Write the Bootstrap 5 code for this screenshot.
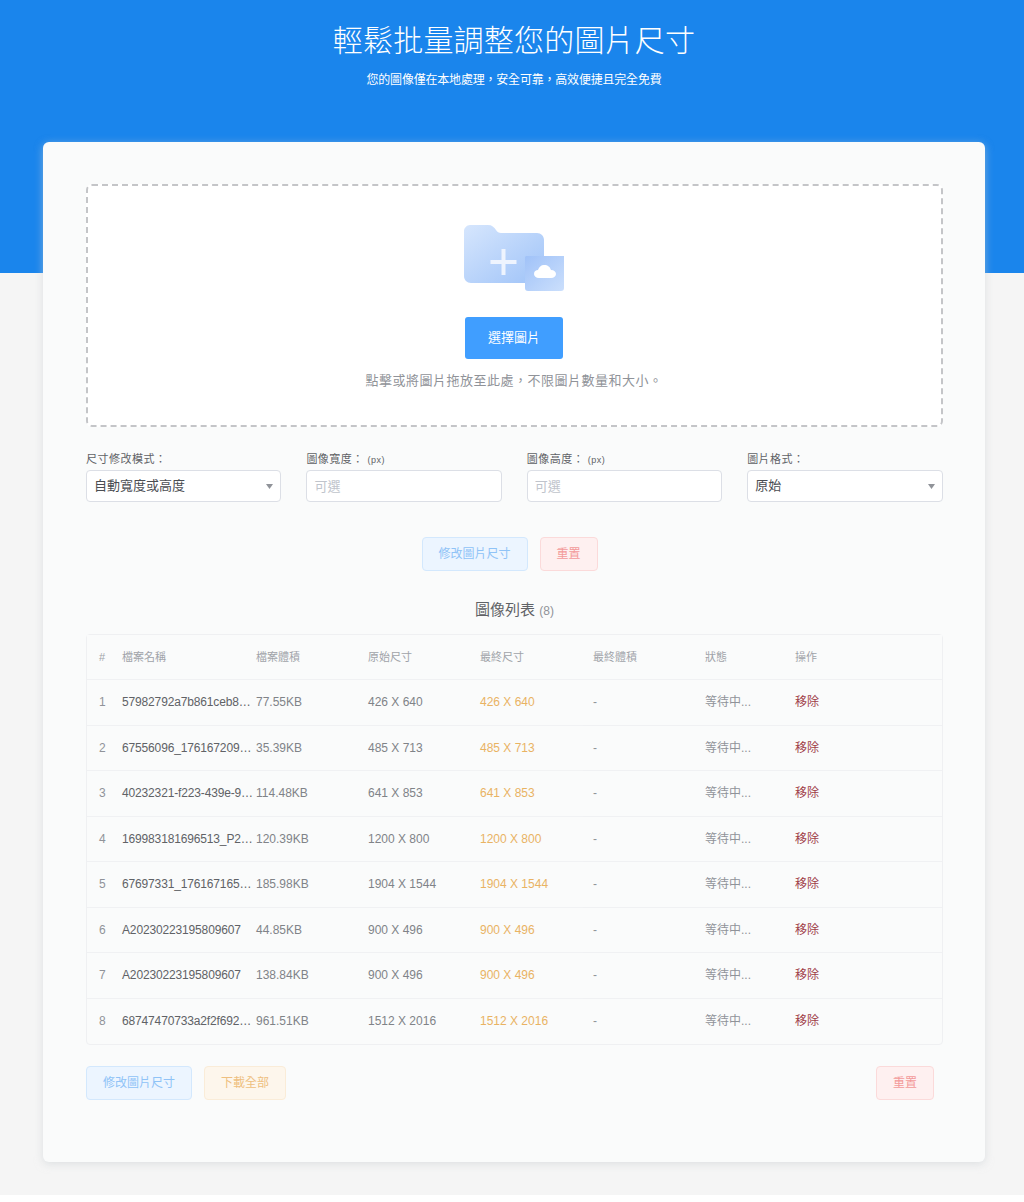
<!DOCTYPE html>
<html lang="zh-Hant">
<head>
<meta charset="utf-8">
<title>輕鬆批量調整您的圖片尺寸</title>
<link href="https://cdn.jsdelivr.net/npm/bootstrap@5.3.0/dist/css/bootstrap.min.css" rel="stylesheet">
<style>
html,body{background:#fff;}
body{font-family:"Liberation Sans","Noto Sans CJK TC",sans-serif;color:#606266;}
.page-wrap{background:#f5f5f5;height:1195px;overflow:hidden;}
.hero-band{background:#1a85ec;height:273px;text-align:center;color:#fff;padding:22px 0 0 4px;margin-bottom:-131px;}
.hero-title{font-size:30px;font-weight:300;line-height:38px;margin:0;letter-spacing:.2px;}
.hero-sub{font-size:12px;line-height:18px;margin:11px 0 0;letter-spacing:-.2px;}
.main-sheet{background:#fafbfb;width:942px;height:1020px;margin:0 0 0 43px;border-radius:6px;box-shadow:0 2px 8px rgba(200,205,210,.55);padding:42px 42px 42px 43px;}
.drop-box{height:243px;background:#fff;border:2px dashed #c4c5c8;border-radius:6px;padding:39px 1px 0 0;}
.pick-btn{background:#409eff;color:#fff;font-size:13px;width:98px;height:42px;border:0;border-radius:3px;margin-top:26px;}
.drop-hint{font-size:13px;letter-spacing:.5px;color:#909399;line-height:18px;margin:13px 0 0;}
.field-row{--bs-gutter-x:25px;margin-top:25px;margin-right:-12px;}
.field-label{font-size:11px;letter-spacing:.5px;line-height:14px;height:14px;color:#606266;margin-bottom:4px;display:block;}
.field-label em{font-style:normal;font-size:9px;line-height:1;}
.field-ctl{height:32px;font-size:13px;line-height:30px;color:#4a4d52;border:1px solid #dcdfe6;border-radius:4px;padding:0 7px;box-shadow:none;background-color:#fff;}
.field-ctl::placeholder{color:#c0c4cc;}
select.field-ctl{background-image:url("data:image/svg+xml,%3Csvg xmlns='http://www.w3.org/2000/svg' width='8' height='5'%3E%3Cpath d='M0 0h8L4 5z' fill='%23909399'/%3E%3C/svg%3E");background-position:right 7px center;background-size:7px 5px;}
.act-btn{font-size:12px;height:34px;padding:0;border-radius:4px;border:1px solid;}
.act-blue{width:106px;color:#8fc3f7;background:#ecf5ff;border-color:#d3e8fd;}
.act-red{width:58px;color:#f39a9a;background:#fef0f0;border-color:#fbdada;}
.act-amber{width:82px;color:#eebf80;background:#fdf6ec;border-color:#faecd8;}
.top-actions{margin-top:35px;gap:12px;padding-right:10px;}
.list-heading{font-size:15px;line-height:20px;font-weight:400;color:#606266;margin:29px 0 13px;text-align:center;}
.list-heading small{font-size:12px;color:#909399;}
.file-table{table-layout:fixed;width:857px;margin:0;font-size:12px;color:#909399;--bs-table-bg:transparent;--bs-table-color:#909399;border:1px solid #eff0f2;border-radius:4px;border-collapse:separate;border-spacing:0;}
.file-table th,.file-table td{padding:0 0 0 10px;border-bottom:1px solid #f0f1f3;white-space:nowrap;overflow:hidden;text-overflow:ellipsis;vertical-align:middle;height:45.5px;font-weight:400;background:transparent;box-shadow:none;}
.file-table tr:last-child td{border-bottom:0;}
.file-table th{height:45px;color:#a0a3a9;background:#fafbfb;font-size:11px;}
.file-table th:first-child,.file-table td:first-child{padding-left:12px;}
.file-table td:nth-child(2){color:#606266;letter-spacing:-.15px;}
.file-table th:nth-child(3),.file-table td:nth-child(3){padding-left:2px;}
.file-table td:nth-child(3),.file-table td:nth-child(4){color:#808388;}
.file-table td:nth-child(5){color:#e6a23c;opacity:.8;}
.c1{width:25px;}.c2{width:142px;}.c3{width:104px;}.c4{width:112px;}.c5{width:113px;}.c6{width:112px;}.c7{width:90px;}
.rm-link{color:#a04048;text-decoration:none;}
.bottom-actions{margin-top:21px;}
.bottom-actions .gap-left{gap:12px;}
.bottom-actions>.act-red{margin-right:9px;}
</style>
</head>
<body>
<div class="page-wrap">
  <header class="hero-band">
    <h1 class="hero-title">輕鬆批量調整您的圖片尺寸</h1>
    <p class="hero-sub">您的圖像僅在本地處理，安全可靠，高效便捷且完全免費</p>
  </header>
  <main class="main-sheet position-relative">
    <section class="drop-box text-center">
      <svg width="100" height="66" viewBox="0 0 100 66" aria-hidden="true">
        <defs>
          <linearGradient id="fg" x1="0" y1="0" x2="1" y2="1"><stop offset="0" stop-color="#d6e6fd"/><stop offset="1" stop-color="#9fc3f8"/></linearGradient>
          <linearGradient id="cg" x1="0" y1="0" x2="1" y2="1"><stop offset="0" stop-color="#a0c2f8"/><stop offset="1" stop-color="#cbdffc"/></linearGradient>
        </defs>
        <path d="M6 0h18c4 0 6 2 8 5 1 2 3 3 5 3h36c4 0 7 3 7 7v37c0 3-3 6-6 6H7c-4 0-7-3-7-7V6c0-3 3-6 6-6z" fill="url(#fg)"/>
        <path d="M37.500 24h4v11h11v4h-11v11h-4V39h-11v-4h11z" fill="#eef4fe"/>
        <path d="M62 31h38v32c0 2-1 3-3 3H64c-2 0-3-1-3-3V32z" fill="url(#cg)"/>
        <path d="M75 53c-3 0-5-2-5-4 0-3 2-4 4-4 1-3 3-5 6-5 4 0 6 2 7 5 3 0 5 2 5 4s-2 4-5 4z" fill="#fff"/>
      </svg>
      <div><button type="button" class="btn pick-btn">選擇圖片</button></div>
      <p class="drop-hint">點擊或將圖片拖放至此處，不限圖片數量和大小。</p>
    </section>
    <form class="row field-row">
      <div class="col-3"><label class="field-label">尺寸修改模式：</label>
        <select class="form-select field-ctl"><option>自動寬度或高度</option></select></div>
      <div class="col-3"><label class="field-label">圖像寬度： <em>(px)</em></label>
        <input class="form-control field-ctl" placeholder="可選"></div>
      <div class="col-3"><label class="field-label">圖像高度： <em>(px)</em></label>
        <input class="form-control field-ctl" placeholder="可選"></div>
      <div class="col-3"><label class="field-label">圖片格式：</label>
        <select class="form-select field-ctl"><option>原始</option></select></div>
    </form>
    <div class="d-flex justify-content-center top-actions">
      <button type="button" class="btn act-btn act-blue">修改圖片尺寸</button>
      <button type="button" class="btn act-btn act-red">重置</button>
    </div>
    <h2 class="list-heading">圖像列表 <small>(8)</small></h2>
    <table class="table file-table">
      <colgroup><col class="c1"><col class="c2"><col class="c3"><col class="c4"><col class="c5"><col class="c6"><col class="c7"><col></colgroup>
      <thead><tr><th>#</th><th>檔案名稱</th><th>檔案體積</th><th>原始尺寸</th><th>最終尺寸</th><th>最終體積</th><th>狀態</th><th>操作</th></tr></thead>
      <tbody>
        <tr><td>1</td><td>57982792a7b861ceb8bd.jpg</td><td>77.55KB</td><td>426 X 640</td><td>426 X 640</td><td>-</td><td>等待中...</td><td><a class="rm-link" href="#">移除</a></td></tr>
        <tr><td>2</td><td>67556096_176167209829.jpg</td><td>35.39KB</td><td>485 X 713</td><td>485 X 713</td><td>-</td><td>等待中...</td><td><a class="rm-link" href="#">移除</a></td></tr>
        <tr><td>3</td><td>40232321-f223-439e-9a1b.jpg</td><td>114.48KB</td><td>641 X 853</td><td>641 X 853</td><td>-</td><td>等待中...</td><td><a class="rm-link" href="#">移除</a></td></tr>
        <tr><td>4</td><td>169983181696513_P2345.jpg</td><td>120.39KB</td><td>1200 X 800</td><td>1200 X 800</td><td>-</td><td>等待中...</td><td><a class="rm-link" href="#">移除</a></td></tr>
        <tr><td>5</td><td>67697331_176167165012.jpg</td><td>185.98KB</td><td>1904 X 1544</td><td>1904 X 1544</td><td>-</td><td>等待中...</td><td><a class="rm-link" href="#">移除</a></td></tr>
        <tr><td>6</td><td>A20230223195809607</td><td>44.85KB</td><td>900 X 496</td><td>900 X 496</td><td>-</td><td>等待中...</td><td><a class="rm-link" href="#">移除</a></td></tr>
        <tr><td>7</td><td>A20230223195809607</td><td>138.84KB</td><td>900 X 496</td><td>900 X 496</td><td>-</td><td>等待中...</td><td><a class="rm-link" href="#">移除</a></td></tr>
        <tr><td>8</td><td>68747470733a2f2f69267.jpg</td><td>961.51KB</td><td>1512 X 2016</td><td>1512 X 2016</td><td>-</td><td>等待中...</td><td><a class="rm-link" href="#">移除</a></td></tr>
      </tbody>
    </table>
    <div class="d-flex justify-content-between bottom-actions">
      <div class="d-flex gap-left">
        <button type="button" class="btn act-btn act-blue">修改圖片尺寸</button>
        <button type="button" class="btn act-btn act-amber">下載全部</button>
      </div>
      <button type="button" class="btn act-btn act-red">重置</button>
    </div>
  </main>
</div>
<script src="https://cdn.jsdelivr.net/npm/bootstrap@5.3.0/dist/js/bootstrap.bundle.min.js"></script>
</body>
</html>
